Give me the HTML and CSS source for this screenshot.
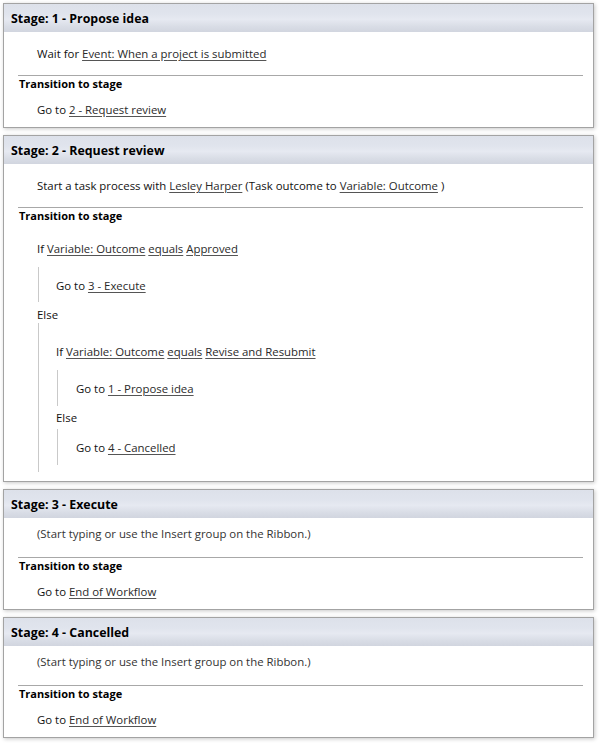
FILE: index.html
```html
<!DOCTYPE html>
<html>
<head>
<meta charset="utf-8">
<link rel="stylesheet" href="styles.css">
</head>
<body>
<div class="card">
  <div class="head">Stage: 1 - Propose idea</div>
  <div class="body">
    <div class="line action">Wait for <a class="lk">Event: When a project is submitted</a></div>
    <div class="rule"></div>
    <div class="line trans-title">Transition to stage</div>
    <div class="line goto">Go to <a class="lk">2 - Request review</a></div>
  </div>
</div>

<div class="card">
  <div class="head">Stage: 2 - Request review</div>
  <div class="body">
    <div class="line action">Start a task process with <a class="lk">Lesley Harper</a> (Task outcome to <a class="lk">Variable: Outcome</a> )</div>
    <div class="rule"></div>
    <div class="line trans-title">Transition to stage</div>
    <div class="cond">
      <div class="line">If <a class="lk">Variable: Outcome</a> <a class="lk">equals</a> <a class="lk">Approved</a></div>
      <div class="branch then">
        <div class="line">Go to <a class="lk">3 - Execute</a></div>
      </div>
      <div class="line else">Else</div>
      <div class="branch otherwise">
        <div class="line nested-if">If <a class="lk">Variable: Outcome</a> <a class="lk">equals</a> <a class="lk">Revise and Resubmit</a></div>
        <div class="branch then inner">
          <div class="line">Go to <a class="lk">1 - Propose idea</a></div>
        </div>
        <div class="line else inner-else">Else</div>
        <div class="branch inner last">
          <div class="line">Go to <a class="lk">4 - Cancelled</a></div>
        </div>
      </div>
    </div>
  </div>
</div>

<div class="card">
  <div class="head">Stage: 3 - Execute</div>
  <div class="body">
    <div class="line placeholder">(Start typing or use the Insert group on the Ribbon.)</div>
    <div class="rule ph-rule"></div>
    <div class="line trans-title">Transition to stage</div>
    <div class="line goto">Go to <a class="lk">End of Workflow</a></div>
  </div>
</div>

<div class="card">
  <div class="head">Stage: 4 - Cancelled</div>
  <div class="body">
    <div class="line placeholder">(Start typing or use the Insert group on the Ribbon.)</div>
    <div class="rule ph-rule"></div>
    <div class="line trans-title">Transition to stage</div>
    <div class="line goto">Go to <a class="lk">End of Workflow</a></div>
  </div>
</div>
</body>
</html>
```
FILE: styles.css
```css
html, body {
  background: #ffffff;
}
body {
  margin: 0;
  padding: 3px 0 0 3px;
  font-family: "Open Sans", "Noto Sans", "DejaVu Sans", sans-serif;
  font-size: 11.4px;
  color: #111111;
}
.card {
  width: 589px;
  border: 1px solid #a3a3a3;
  background: #ffffff;
  margin-bottom: 7px;
  box-shadow: 1px 1px 4px rgba(0, 0, 0, 0.22);
}
.head {
  height: 28px;
  line-height: 30px;
  padding-left: 7px;
  font-weight: 700;
  font-size: 12.4px;
  color: #000000;
  background: linear-gradient(#dde1ea 0%, #e0e4ed 35%, #e6e9f1 55%, #d9dde6 80%, #d1d5df 100%);
}
.body {
  padding: 0 0 9px 0;
}
.line {
  height: 16px;
  line-height: 16px;
  white-space: nowrap;
}
.lk {
  color: #2a2a2a;
  text-decoration: underline;
  text-decoration-color: #555555;
  text-underline-offset: 2px;
}
.action {
  margin-top: 14px;
  padding-left: 33px;
}
.placeholder {
  margin-top: 8px;
  padding-left: 33px;
  color: #333333;
}
.rule {
  height: 1px;
  background: #a8a8a8;
  margin: 13px 10px 0 14px;
}
.ph-rule {
  margin-top: 15px;
}
.trans-title {
  padding-left: 15px;
  font-weight: 700;
  font-size: 11px;
  color: #000000;
}
.goto {
  margin-top: 10px;
  padding-left: 33px;
}
.cond {
  margin-top: 17px;
  padding-left: 33px;
}
.branch {
  margin-left: 1px;
  border-left: 1px solid #c9c9c9;
  padding-left: 17px;
}
.branch.then {
  margin-top: 10px;
  padding-top: 11px;
  padding-bottom: 8px;
}
.else {
  margin-top: 5px;
}
.branch.otherwise {
  padding-top: 21px;
  padding-bottom: 7px;
}
.branch.inner {
  padding-left: 18px;
  padding-top: 11px;
  padding-bottom: 9px;
}
.inner-else {
  margin-top: 4px;
}
.branch.last {
  margin-top: 3px;
}
```
